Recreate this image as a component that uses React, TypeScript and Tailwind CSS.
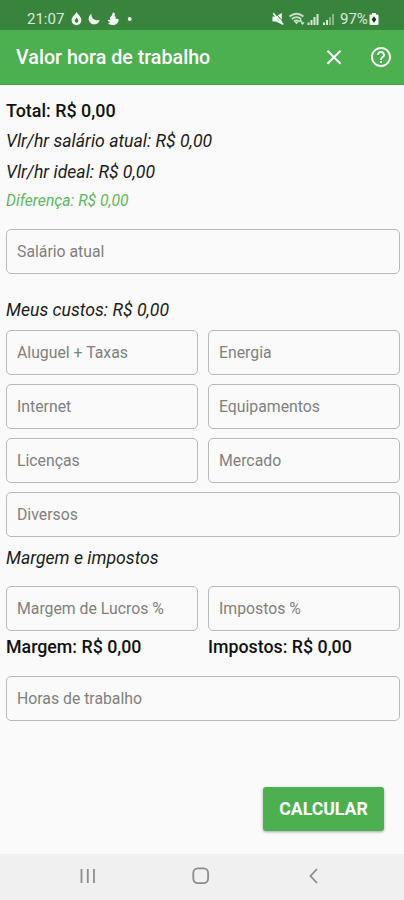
import { clsx } from "clsx";

function Field({ label, className }: { label: string; className?: string }) {
  return (
    <div
      tabIndex={0}
      className={clsx(
        "flex h-[45px] items-center rounded-[5px] border border-[#b9b9b9] pl-[10px] text-[15.8px] text-[#808080]",
        className,
      )}
    >
      <span className="whitespace-nowrap">{label}</span>
    </div>
  );
}

function StatusBar() {
  return (
    <div className="flex h-[30px] items-center bg-[#39843d] pt-[7px] pl-[27px] text-[15px] text-[#d8ead8]">
      <span className="w-[44px] leading-[22px]">21:07</span>
      <svg width="64" height="16" viewBox="0 0 64 16" fill="#f2faf2">
        <path d="M5.5 1C6.8 3.3 10.400 5.600 10.400 9.300a4.900 4.900 0 0 1-9.800 0C.6 5.600 4.300 4 5.500 1z" />
        <path d="M5.500 6.500c.6 1.200 1.800 2 1.800 3.500a1.800 1.800 0 0 1-3.600 0c0-1.500 1.200-2 1.800-3.500z" fill="#39843d" />
        <path d="M20.500 2.800c-.6 4.200 2.800 7.400 8.200 6.200a5.600 5.600 0 1 1-8.200-6.200z" />
        <path d="M42 1.500c1.800 0 2.400 1.500 1.600 3.500 1.300.6 1.600 2 .6 3 1.500-.3 3.200-.2 3.500.8-.4 3.800-2.800 5.200-5.700 5.200-2.800 0-4.500-1-4.800-2.300.8.100 1.500-.1 2-.5-1.700-.4-2.500-1.300-2.600-2.500 1 .4 2 .2 2.700-.3-.8-1-.6-2 .6-2.800 1.500-1 1-2.800 2.100-4.100z" />
        <circle cx="58.700" cy="8" r="1.900" />
      </svg>
      <svg className="ml-[137px]" width="64" height="16" viewBox="0 0 64 16" fill="#d5e8d5">
        <path d="M.5 5.500h3.200L9.800 2v11.500l-5.800-3H.5z" fill="#f2faf2" />
        <path d="M3.200 2l9 9.800" stroke="#39843d" strokeWidth="1" />
        <path d="M1.200 2.200l10 11.300" stroke="#f2faf2" strokeWidth="1.700" />
        <g fill="none" stroke="#c9e0ca" strokeWidth="1.800">
          <path d="M17.500 5.500q7-5.500 14 0" />
          <path d="M19.800 8q4.700-3.700 9.400 0" />
          <path d="M22 10.500q2.500-2 5 0" />
        </g>
        <path d="M22.700 11h3.600l-1.800 2.300zM28.500 8l2.200 2.800h-4.400zM30.500 14l-2.200-2.800h4.400z" />
        <path d="M35.500 11.500h2V14h-2zM38.500 9h2v5h-2zM41.500 6h2v8h-2zM44.500 3h2v11h-2z" />
        <path d="M51 11.500h2V14h-2zM54 9h2v5h-2z" />
        <path d="M57 6h2v8h-2zM60 3h2v11h-2z" opacity=".5" />
      </svg>
      <span className="w-[29px] pl-[4px] leading-[22px]">97%</span>
      <svg width="10" height="14" viewBox="0 0 10 14" className="ml-[4px]">
        <path d="M3 1h4v1.500h1.500a1 1 0 0 1 1 1V12a1 1 0 0 1-1 1h-7a1 1 0 0 1-1-1V3.500a1 1 0 0 1 1-1H3z" fill="#f4fbf4" />
        <path d="M5 4.300L7.300 7.500 5 10.700 2.700 7.500z" fill="#17331a" />
      </svg>
    </div>
  );
}

function AppBar() {
  return (
    <header className="flex h-[55px] items-center border-b border-[#45a049] bg-[#4cb050] pl-[16px] text-white">
      <h1 className="w-[310px] pt-[2px] text-[19.7px] font-medium whitespace-nowrap">Valor hora de trabalho</h1>
      <svg width="16" height="16" viewBox="0 0 16 16" fill="none" stroke="white" strokeWidth="2">
        <path d="M1.500 1.800l13 13M14.500 1.800l-13 13" />
      </svg>
      <svg className="ml-[28px]" width="22" height="22" viewBox="1 1 22 22" fill="white">
        <path d="M11 18h2v-2h-2v2zm1-16C6.480 2 2 6.480 2 12s4.480 10 10 10 10-4.480 10-10S17.520 2 12 2zm0 18c-4.410 0-8-3.590-8-8s3.590-8 8-8 8 3.590 8 8-3.590 8-8 8zm0-14c-2.210 0-4 1.790-4 4h2c0-1.100.9-2 2-2s2 .9 2 2c0 2-3 1.750-3 5h2c0-2.250 3-2.500 3-5 0-2.210-1.790-4-4-4z" />
      </svg>
    </header>
  );
}

function NavBar() {
  return (
    <nav className="flex h-[46px] items-center bg-[#f0f0f0] pb-[3px] pl-[80px]">
      <svg width="16" height="16" viewBox="0 0 16 16" stroke="#8c8c8c" strokeWidth="1.800">
        <path d="M1.500 1v14M7.800 1v14M14 1v14" />
      </svg>
      <svg className="ml-[96px]" width="18" height="18" viewBox="0 0 18 18" fill="none" stroke="#8c8c8c" strokeWidth="1.800">
        <rect x="1.300" y="1.300" width="14.800" height="14.800" rx="4.500" />
      </svg>
      <svg className="ml-[98px]" width="12" height="16" viewBox="0 0 12 16" fill="none" stroke="#8c8c8c" strokeWidth="1.800">
        <path d="M9 1L2.500 8 9 15" />
      </svg>
    </nav>
  );
}

export default function App() {
  return (
    <div className="flex h-[900px] w-[404px] flex-col overflow-hidden bg-[#fafafa] font-['Roboto',sans-serif] text-[#1c1c1c]">
      <StatusBar />
      <AppBar />

      <main className="flex-1 pt-[11px] pr-[4px] pl-[6px] text-[17.65px]">
        <div className="whitespace-nowrap">
          <p className="h-[30px] text-[17.9px] font-medium leading-[30px] text-[#111]">Total: R$ 0,00</p>
          <p className="h-[31px] leading-[30px] italic">Vlr/hr salário atual: R$ 0,00</p>
          <p className="h-[30px] leading-[30px] italic">Vlr/hr ideal: R$ 0,00</p>
          <p className="h-[28px] text-[15.7px] leading-[28px] text-[#5db860] italic">Diferença: R$ 0,00</p>
        </div>
        <Field label="Salário atual" className="mt-[14px]" />

        <h2 className="mt-[21px] h-[30px] leading-[30px] italic">Meus custos: R$ 0,00</h2>
        <div className="mt-[5px] grid grid-cols-2 gap-x-[10px] gap-y-[9px]">
          <Field label="Aluguel + Taxas" />
          <Field label="Energia" />
          <Field label="Internet" />
          <Field label="Equipamentos" />
          <Field label="Licenças" />
          <Field label="Mercado" />
          <Field label="Diversos" className="col-span-2" />
        </div>

        <h2 className="mt-[6px] h-[30px] leading-[30px] italic">Margem e impostos</h2>
        <div className="mt-[13px] grid grid-cols-2 gap-x-[10px]">
          <Field label="Margem de Lucros %" />
          <Field label="Impostos %" />
          <p className="h-[30px] pt-px text-[17.8px] font-medium leading-[30px] text-[#111]">Margem: R$ 0,00</p>
          <p className="h-[30px] pt-px text-[17.8px] font-medium leading-[30px] text-[#111]">Impostos: R$ 0,00</p>
        </div>
        <Field label="Horas de trabalho" className="mt-[15px]" />

        <div className="mt-[66px] flex justify-end pr-[16px]">
          <button className="h-[44px] w-[121px] rounded-[3px] bg-[#4cb050] text-[17.7px] font-bold text-white shadow-[0_1px_3px_rgba(0,0,0,0.35)]">
            CALCULAR
          </button>
        </div>
      </main>

      <NavBar />
    </div>
  );
}
